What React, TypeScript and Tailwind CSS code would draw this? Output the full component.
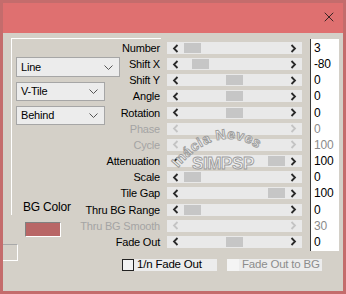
import { X } from 'lucide-react'

type Row = {
  label: string
  value: string
  thumb?: string
  disabled?: boolean
}

const rows: Row[] = [
  { label: 'Number', value: '3', thumb: 'ml-[0px]' },
  { label: 'Shift X', value: '-80', thumb: 'ml-[8px]' },
  { label: 'Shift Y', value: '0', thumb: 'ml-[42px]' },
  { label: 'Angle', value: '0', thumb: 'ml-[42px]' },
  { label: 'Rotation', value: '0', thumb: 'ml-[42px]' },
  { label: 'Phase', value: '0', disabled: true },
  { label: 'Cycle', value: '100', disabled: true },
  { label: 'Attenuation', value: '100', thumb: 'ml-[84px]' },
  { label: 'Scale', value: '0', thumb: 'ml-[0px]' },
  { label: 'Tile Gap', value: '100', thumb: 'ml-[84px]' },
  { label: 'Thru BG Range', value: '0', thumb: 'ml-[0px]' },
  { label: 'Thru BG Smooth', value: '30', disabled: true },
  { label: 'Fade Out', value: '0', thumb: 'ml-[42px]' },
]

function Arrow({ dir, disabled }: { dir: 'left' | 'right'; disabled?: boolean }) {
  return (
    <svg width="7" height="9" viewBox="0 0 7 9" className="block">
      <path
        d={dir === 'left' ? 'M5.5 1 L2 4.5 L5.5 8' : 'M1.5 1 L5 4.5 L1.5 8'}
        fill="none"
        stroke={disabled ? '#c4c4c4' : '#2a2a2a'}
        strokeWidth="1.8"
      />
    </svg>
  )
}

function Slider({ row }: { row: Row }) {
  return (
    <div className="flex h-[12px] w-[135px] bg-[#e9e9e9]">
      <div className="flex w-[17px] items-center justify-center">
        <Arrow dir="left" disabled={row.disabled} />
      </div>
      <div className="flex-1">
        {!row.disabled && <div className={`mt-[1px] h-[10px] w-[17px] bg-[#c6c6c6] ${row.thumb}`} />}
      </div>
      <div className="flex w-[17px] items-center justify-center">
        <Arrow dir="right" disabled={row.disabled} />
      </div>
    </div>
  )
}

function Dropdown({ label, width, height }: { label: string; width: string; height: string }) {
  return (
    <div className={`flex shrink-0 items-center justify-between border border-[#a6a6a6] bg-[#ececec] pl-[4px] pr-[6px] ${width} ${height}`}>
      <span className="text-[11px] text-black">{label}</span>
      <svg width="9" height="5" viewBox="0 0 9 5">
        <path d="M0.5 0.5 L4.5 4.5 L8.5 0.5" fill="none" stroke="#555" strokeWidth="1" />
      </svg>
    </div>
  )
}

export default function App() {
  return (
    <div
      className="h-[294px] w-[346px] border-[3px] border-[#c46c6c] bg-[#d4d0c8] text-[11px] tracking-[-0.2px] text-black"
      style={{ fontFamily: '"Liberation Sans", Arial, sans-serif' }}
    >
      {/* Title bar */}
      <div className="flex h-[30px] items-start justify-end bg-[#df7070] pr-[6px] pt-[6px]">
        <X size={16} strokeWidth={1.2} color="#111" />
      </div>

      {/* Body */}
      <div className="relative grid h-[257px]">
        {/* Left panel */}
        <div className="col-start-1 row-start-1 flex flex-col">
          <div className="ml-[8px] mt-[5px] flex h-[177px] w-[150px] shrink-0 flex-col border-l border-t border-white">
            <div className="ml-[4px] mt-[18px] shrink-0">
              <Dropdown label="Line" width="w-[104px]" height="h-[20px]" />
            </div>
            <div className="ml-[4px] mt-[5px] shrink-0">
              <Dropdown label="V-Tile" width="w-[89px]" height="h-[19px]" />
            </div>
            <div className="ml-[4px] mt-[5px] shrink-0">
              <Dropdown label="Behind" width="w-[89px]" height="h-[19px]" />
            </div>
            <div className="ml-[11px] mt-[75px] shrink-0 text-[12px] leading-[14px]">BG Color</div>
            <div className="ml-[13px] mt-[8px] h-[15px] w-[36px] shrink-0 border border-b-white border-l-[#808080] border-r-white border-t-[#808080] bg-[#b86666]" />
          </div>
          <div className="mt-[29px] h-[17px] w-[15px] shrink-0 border-b border-r border-t border-b-white border-r-white border-t-[#a8a8a8]" />
        </div>

        {/* Parameter rows */}
        <div className="col-start-1 row-start-1 flex flex-col pt-[6px]">
          {rows.map((row) => (
            <div key={row.label} className="grid h-[16.17px] grid-cols-[157px_135px_30px] items-center gap-x-[7px]">
              <div className={`text-right leading-[14px] ${row.disabled ? 'text-[#a4a4a4]' : 'text-black'}`}>
                {row.label}
              </div>
              <Slider row={row} />
              <div
                className={`ml-[1px] flex h-full items-center border-l border-[#3c3c3c] bg-white pl-[3px] text-[12px] ${
                  row.disabled ? 'text-[#8a8a8a]' : 'text-black'
                }`}
              >
                {row.value}
              </div>
            </div>
          ))}

          {/* Checkboxes */}
          <div className="ml-[119px] mt-[10px] flex items-center">
            <div className="h-[12px] w-[12px] border border-[#222] bg-[#f2f2f2]" />
            <div className="flex h-[12px] w-[83px] items-center whitespace-nowrap bg-[#ececec] pl-[3px] text-[11.5px]">1/n Fade Out</div>
            <div className="ml-[10px] h-[12px] w-[12px] bg-[#f4f4f4]" />
            <div className="flex h-[12px] w-[83px] items-center whitespace-nowrap bg-[#ececec] pl-[3px] text-[11.5px] text-[#8c8c8c]">
              Fade Out to BG
            </div>
          </div>
        </div>

        {/* Watermark */}
        <svg className="pointer-events-none absolute left-[162px] top-[85px]" width="130" height="70" viewBox="165 118 130 70">
          <defs>
            <path id="arc" d="M178 168 Q224 114 272 160" />
          </defs>
          <text
            fontFamily='"Liberation Sans", Arial, sans-serif'
            fontSize="14"
            fontWeight="bold"
            letterSpacing="0.6"
            fill="#f4f4f4"
            stroke="#9c9c9c"
            strokeWidth="0.9"
          >
            <textPath href="#arc">Inácia Neves</textPath>
          </text>
          <text
            x="192"
            y="169"
            fontFamily='"Liberation Sans", Arial, sans-serif'
            fontSize="17"
            fontWeight="bold"
            letterSpacing="-0.4"
            fill="#f0f0f0"
            stroke="#9c9c9c"
            strokeWidth="0.9"
          >
            SIMPSP
          </text>
        </svg>
      </div>
    </div>
  )
}
